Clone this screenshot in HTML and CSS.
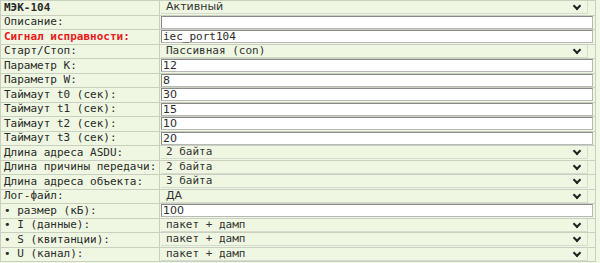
FILE: index.html
```html
<!DOCTYPE html>
<html lang="ru">

<head>
  <meta charset="UTF-8">
  <title>МЭК-104</title>
  <link rel="stylesheet" href="styles.css">
</head>

<body>
  <table class="settings">
    <tr>
      <td class="name title">МЭК-104</td>
      <td class="value">
        <div class="select sans">Активный<span class="arrow"></span></div>
      </td>
    </tr>
    <tr>
      <td class="name">Описание:</td>
      <td class="value"><div class="input"></div></td>
    </tr>
    <tr>
      <td class="name alarm">Сигнал исправности:</td>
      <td class="value"><div class="input">iec_port104</div></td>
    </tr>
    <tr>
      <td class="name">Старт/Стоп:</td>
      <td class="value">
        <div class="select">Пассивная (con)<span class="arrow"></span></div>
      </td>
    </tr>
    <tr>
      <td class="name">Параметр K:</td>
      <td class="value"><div class="input sans">12</div></td>
    </tr>
    <tr>
      <td class="name">Параметр W:</td>
      <td class="value"><div class="input sans">8</div></td>
    </tr>
    <tr>
      <td class="name">Таймаут t0 (сек):</td>
      <td class="value"><div class="input sans">30</div></td>
    </tr>
    <tr>
      <td class="name">Таймаут t1 (сек):</td>
      <td class="value"><div class="input sans">15</div></td>
    </tr>
    <tr>
      <td class="name">Таймаут t2 (сек):</td>
      <td class="value"><div class="input sans">10</div></td>
    </tr>
    <tr>
      <td class="name">Таймаут t3 (сек):</td>
      <td class="value"><div class="input sans">20</div></td>
    </tr>
    <tr>
      <td class="name">Длина адреса ASDU:</td>
      <td class="value">
        <div class="select">2 байта<span class="arrow"></span></div>
      </td>
    </tr>
    <tr>
      <td class="name">Длина причины передачи:</td>
      <td class="value">
        <div class="select">2 байта<span class="arrow"></span></div>
      </td>
    </tr>
    <tr>
      <td class="name">Длина адреса объекта:</td>
      <td class="value">
        <div class="select">3 байта<span class="arrow"></span></div>
      </td>
    </tr>
    <tr>
      <td class="name">Лог-файл:</td>
      <td class="value">
        <div class="select sans">ДА<span class="arrow"></span></div>
      </td>
    </tr>
    <tr>
      <td class="name">• размер (кБ):</td>
      <td class="value"><div class="input sans">100</div></td>
    </tr>
    <tr>
      <td class="name">• I (данные):</td>
      <td class="value">
        <div class="select">пакет + дамп<span class="arrow"></span></div>
      </td>
    </tr>
    <tr>
      <td class="name">• S (квитанции):</td>
      <td class="value">
        <div class="select">пакет + дамп<span class="arrow"></span></div>
      </td>
    </tr>
    <tr>
      <td class="name">• U (канал):</td>
      <td class="value">
        <div class="select">пакет + дамп<span class="arrow"></span></div>
      </td>
    </tr>
  </table>
</body>

</html>
```

FILE: styles.css
```css
body {
  margin: 0;
  background: #f0f8e4;
  font: 11px "DejaVu Sans Mono", monospace;
  color: #2a2a2a;
}

.settings {
  border-collapse: collapse;
  width: 596px;
}

.settings tr {
  height: 14.5px;
}

.settings td {
  border: 1px solid #c9d0c2;
  padding: 0;
  background: #eff7e2;
  overflow: hidden;
}

.name {
  width: 155px;
  padding-left: 3px !important;
  white-space: nowrap;
  line-height: 12px;
}

.title {
  font-weight: bold;
}

.alarm {
  color: #e81c1c;
  font-weight: bold;
}

.value {
  padding: 0 1px !important;
  line-height: 12px;
}

.sans {
  font-family: "DejaVu Sans", sans-serif;
}

.select {
  position: relative;
  height: 12px;
  line-height: 12px;
  margin-right: 6px;
  padding-left: 5px;
  border: 1px solid #d6dbd0;
  border-width: 0 1px 1px 0;
  color: #333;
}

.arrow {
  position: absolute;
  right: 7px;
  top: 2px;
  width: 4px;
  height: 4px;
  border: solid #222;
  border-width: 0 2px 2px 0;
  transform: rotate(45deg);
}

.input {
  height: 11px;
  line-height: 11px;
  background: #fff;
  border: 1px solid #b8b8b8;
  border-top-color: #8a8a8a;
  border-left-color: #8a8a8a;
  padding-left: 1px;
  margin-right: 1px;
}
```
